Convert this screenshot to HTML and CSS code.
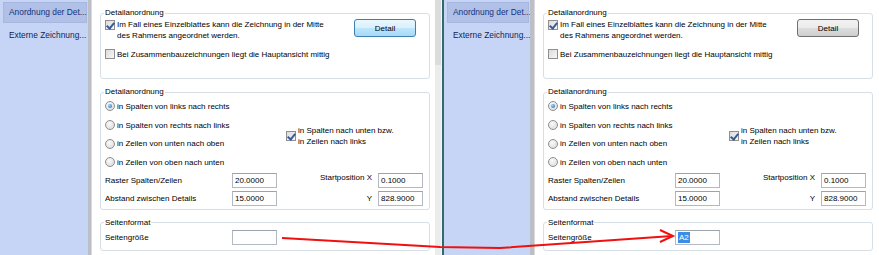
FILE: index.html
```html
<!DOCTYPE html>
<html>
<head>
    <title>Detailanordnung</title>
    <link rel="stylesheet" href="styles.css">
</head>
<body>
    <div class="shots">
        <!-- before -->
        <div class="shot shot-left">
            <div class="sidebar">
                <div class="nav-item selected">Anordnung der Det...</div>
                <div class="nav-item">Externe Zeichnung...</div>
            </div>
            <div class="splitter"></div>
            <div class="content">
                <fieldset class="group group-top">
                    <legend>Detailanordnung</legend>
                    <div class="top-row">
                        <div class="option option-wrap">
                            <span class="check checked"></span>
                            <span>Im Fall eines Einzelblattes kann die Zeichnung in der Mitte<br>des Rahmens angeordnet werden.</span>
                        </div>
                        <button class="btn btn-hover">Detail</button>
                    </div>
                    <div class="option">
                        <span class="check"></span>
                        <span>Bei Zusammenbauzeichnungen liegt die Hauptansicht mittig</span>
                    </div>
                </fieldset>

                <fieldset class="group group-order">
                    <legend>Detailanordnung</legend>
                    <div class="order-grid">
                        <div class="option"><span class="radio on"></span><span>in Spalten von links nach rechts</span></div>
                        <div class="option"><span class="radio"></span><span>in Spalten von rechts nach links</span></div>
                        <div class="option"><span class="radio"></span><span>in Zeilen von unten nach oben</span></div>
                        <div class="option"><span class="radio"></span><span>in Zeilen von oben nach unten</span></div>
                        <div class="option option-wrap side-check">
                            <span class="check checked"></span>
                            <span>in Spalten nach unten bzw.<br>in Zeilen nach links</span>
                        </div>
                    </div>
                    <div class="field-grid">
                        <span>Raster Spalten/Zeilen</span>
                        <span class="input">20.0000</span>
                        <span class="right-label raised">Startposition X</span>
                        <span class="input">0.1000</span>
                        <span>Abstand zwischen Details</span>
                        <span class="input">15.0000</span>
                        <span class="right-label">Y</span>
                        <span class="input">828.9000</span>
                    </div>
                </fieldset>

                <fieldset class="group group-page">
                    <legend>Seitenformat</legend>
                    <div class="field-grid">
                        <span>Seitengröße</span>
                        <span class="input"></span>
                    </div>
                </fieldset>
            </div>
            <div class="scroll"></div>
        </div>

        <!-- after -->
        <div class="shot shot-right">
            <div class="edge"></div>
            <div class="sidebar">
                <div class="nav-item selected">Anordnung der Det...</div>
                <div class="nav-item">Externe Zeichnung...</div>
            </div>
            <div class="splitter"></div>
            <div class="content">
                <fieldset class="group group-top">
                    <legend>Detailanordnung</legend>
                    <div class="top-row">
                        <div class="option option-wrap">
                            <span class="check checked"></span>
                            <span>Im Fall eines Einzelblattes kann die Zeichnung in der Mitte<br>des Rahmens angeordnet werden.</span>
                        </div>
                        <button class="btn">Detail</button>
                    </div>
                    <div class="option">
                        <span class="check"></span>
                        <span>Bei Zusammenbauzeichnungen liegt die Hauptansicht mittig</span>
                    </div>
                </fieldset>

                <fieldset class="group group-order">
                    <legend>Detailanordnung</legend>
                    <div class="order-grid">
                        <div class="option"><span class="radio on"></span><span>in Spalten von links nach rechts</span></div>
                        <div class="option"><span class="radio"></span><span>in Spalten von rechts nach links</span></div>
                        <div class="option"><span class="radio"></span><span>in Zeilen von unten nach oben</span></div>
                        <div class="option"><span class="radio"></span><span>in Zeilen von oben nach unten</span></div>
                        <div class="option option-wrap side-check">
                            <span class="check checked"></span>
                            <span>in Spalten nach unten bzw.<br>in Zeilen nach links</span>
                        </div>
                    </div>
                    <div class="field-grid">
                        <span>Raster Spalten/Zeilen</span>
                        <span class="input">20.0000</span>
                        <span class="right-label raised">Startposition X</span>
                        <span class="input">0.1000</span>
                        <span>Abstand zwischen Details</span>
                        <span class="input">15.0000</span>
                        <span class="right-label">Y</span>
                        <span class="input">828.9000</span>
                    </div>
                </fieldset>

                <fieldset class="group group-page">
                    <legend>Seitenformat</legend>
                    <div class="field-grid">
                        <span>Seitengröße</span>
                        <span class="input"><span class="selection">A2</span></span>
                    </div>
                </fieldset>
            </div>
        </div>

        <svg class="arrow" width="879" height="255" viewBox="0 0 879 255">
            <polyline points="282,238 440,247 500,248 672,236" fill="none" stroke="#f01010" stroke-width="2"/>
            <polyline points="660,230 673,236 660,242" fill="none" stroke="#f01010" stroke-width="2"/>
        </svg>
    </div>
</body>
</html>
```

FILE: styles.css
```css
body {
    margin: 0;
    width: 879px;
    height: 255px;
    overflow: hidden;
    background-color: #fff;
    font-family: "Liberation Sans", Arial, sans-serif;
    font-size: 8px;
    color: #000;
}

.shots {
    position: relative;
    display: flex;
    height: 255px;
}

.shot {
    display: flex;
    height: 255px;
}

.shot-left {
    width: 442px;
}

.shot-right {
    width: 437px;
}

.edge {
    width: 2px;
    background-color: #2f6a72;
}

.sidebar {
    width: 88px;
    padding-top: 2px;
    background-color: #c6d5f6;
    box-sizing: border-box;
}

.shot-right .sidebar {
    width: 86px;
}

.nav-item {
    height: 21px;
    margin: 0 1px 0 3px;
    padding-left: 6px;
    line-height: 21px;
    font-size: 8.4px;
    color: #16244c;
    white-space: nowrap;
    box-sizing: border-box;
}

.nav-item + .nav-item {
    margin-top: 2px;
}

.nav-item.selected {
    background-color: #b0c0e6;
    border: 1px solid #a6b8e0;
    line-height: 19px;
    padding-left: 5px;
    color: #14347a;
}

.splitter {
    width: 4px;
    background-color: #bcc0c6;
    border-right: 1px solid #d8dadd;
    box-sizing: border-box;
}

.shot-right .splitter {
    width: 5px;
}

.content {
    flex: 1;
    padding: 8px 0 0 8px;
    background-color: #fff;
}

.scroll {
    width: 6px;
    background: linear-gradient(#dcdcdc 0, #dcdcdc 65px, #ececec 65px);
    border-right: 1px solid #f6f6f6;
}

.group {
    width: 330px;
    margin: 0 0 8px 0;
    padding: 0 6px 0 4px;
    border: 1px solid #d5dfe5;
    border-radius: 3px;
    box-sizing: border-box;
    min-width: 0;
}

.group legend {
    padding: 0 1px;
    margin-left: -1px;
    line-height: 10px;
}

.option {
    display: flex;
    align-items: center;
    gap: 2px;
    white-space: nowrap;
}

.option-wrap {
    line-height: 11px;
}

.top-row {
    display: flex;
    justify-content: space-between;
    align-items: flex-start;
    padding-top: 1px;
    margin-bottom: 8px;
}

.group-top {
    padding-bottom: 19px;
}

.group-top .option-wrap {
    align-items: flex-start;
}

.group-top .option-wrap .check {
    margin-top: 1px;
}

.btn {
    width: 62px;
    height: 18px;
    margin: 0 7px 0 0;
    padding: 0;
    font-family: inherit;
    font-size: 8px;
    color: #000;
    border: 1px solid #707070;
    border-radius: 3px;
    background: linear-gradient(#f2f2f2 0%, #ebebeb 50%, #dddddd 50%, #cfcfcf 100%);
}

.btn-hover {
    border-color: #3c7fb1;
    background: linear-gradient(#eaf6fd 0%, #d9f0fc 50%, #bee6fd 50%, #a7d9f5 100%);
}

.check {
    flex: none;
    position: relative;
    width: 10px;
    height: 10px;
    border: 1px solid #8f8f8f;
    background: linear-gradient(135deg, #dcdcdc, #f6f6f6);
    box-sizing: border-box;
}

.check.checked::after {
    content: "";
    position: absolute;
    left: 2px;
    top: 0px;
    width: 3px;
    height: 6px;
    border: solid #3a5a9c;
    border-width: 0 2px 2px 0;
    transform: rotate(40deg);
}

.radio {
    flex: none;
    width: 10px;
    height: 10px;
    border: 1px solid #8f8f8f;
    border-radius: 50%;
    background: radial-gradient(circle at 40% 35%, #fafafa, #d6d6d6);
    box-sizing: border-box;
    position: relative;
}

.radio.on::after {
    content: "";
    position: absolute;
    left: 2px;
    top: 2px;
    width: 4px;
    height: 4px;
    border-radius: 50%;
    background: radial-gradient(circle at 35% 35%, #9ad6ff, #1c5fb0);
}

.order-grid {
    display: grid;
    grid-template-columns: 181px 1fr;
    grid-auto-rows: 18.7px;
}

.order-grid .option {
    grid-column: 1;
}

.side-check {
    grid-column: 2 !important;
    grid-row: 2 / 4;
    align-self: center;
    padding-top: 3px;
}

.field-grid {
    display: grid;
    grid-template-columns: 127px 45px 1fr 45px;
    grid-auto-rows: 15px;
    row-gap: 3px;
    column-gap: 0;
    align-items: center;
    padding-top: 1px;
}

.group-order {
    padding-bottom: 3px;
}

.group-page {
    padding-bottom: 5px;
}

.group-page .field-grid {
    padding-top: 2px;
}

.right-label {
    text-align: right;
    padding-right: 6px;
}

.raised {
    position: relative;
    top: -3px;
}

.input {
    height: 15px;
    padding-left: 2px;
    line-height: 13px;
    border: 1px solid #b4b8c0;
    border-top-color: #9da3ad;
    background-color: #fff;
    box-sizing: border-box;
}

.selection {
    display: inline-block;
    padding: 0 1px;
    line-height: 11px;
    background-color: #3a8ee8;
    color: #fff;
}

.arrow {
    position: absolute;
    left: 0;
    top: 0;
    pointer-events: none;
}
```
